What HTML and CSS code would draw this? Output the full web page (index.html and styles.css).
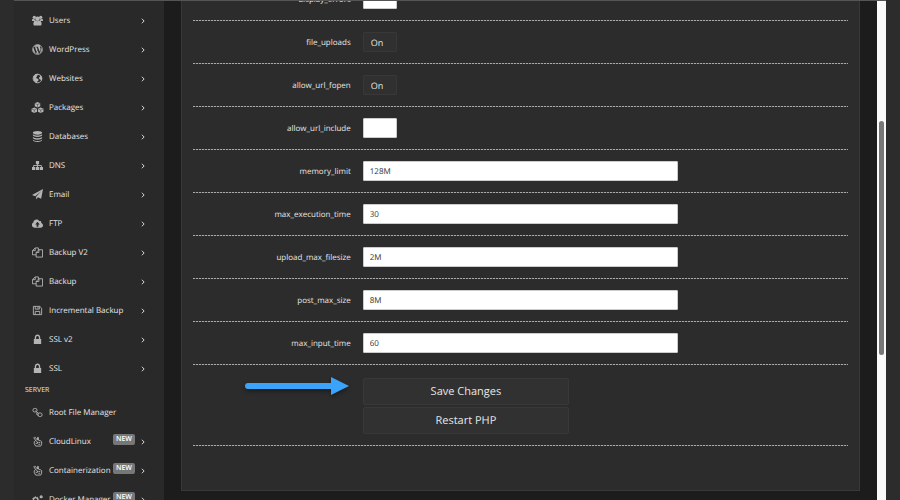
FILE: index.html
```
<!DOCTYPE html>
<html lang="en">
<head>
    <meta charset="UTF-8">
    <meta name="viewport" content="width=device-width, initial-scale=1.0">
    <title>PHP Configuration</title>
    <link rel="stylesheet" href="styles.css">
</head>
<body>
    <div class="app">
        <nav class="sidebar">
            <a class="nav-item" href="#">
                <svg class="icon" viewBox="0 0 24 24"><circle cx="5" cy="5" r="3.500"/><circle cx="19" cy="5" r="3.500"/><circle cx="12" cy="8" r="5"/><path d="M0 13c0-4 1-5 2-5 2 1 3 1 4 1 0 2 1 3 2 4H0zM24 13c0-4-1-5-2-5-2 1-3 1-4 1 0 2-1 3-2 4h8zM3 19c0-4 2-7 5-7 3 2 5 2 8 0 3 0 5 3 5 7 0 3-1 4-3 4H6c-2 0-3-1-3-4z"/></svg>
                <span>Users</span>
                <svg class="chevron" viewBox="0 0 6 8"><path d="M1.5 1l3 3-3 3"/></svg>
            </a>
            <a class="nav-item" href="#">
                <svg class="icon" viewBox="0 0 24 24"><circle class="line" cx="12" cy="12" r="10.5"/><path d="M3 8l5 13c-4-2-6-5-6-9 0-1 .4-3 1-4zM4 6c4-5 11-6 15-2-2 0-2 2-1 4 1 1 1 3 0 6l-1 3-4-10 1-.3V6H9v1l1 .2 2 4-2 6L6.500 7.200 8 7V6zM12 13l3 8c-2 .7-4 .7-6 0zM21 8c2 5 0 10-4 12l3-8z"/></svg>
                <span>WordPress</span>
                <svg class="chevron" viewBox="0 0 6 8"><path d="M1.5 1l3 3-3 3"/></svg>
            </a>
            <a class="nav-item" href="#">
                <svg class="icon" viewBox="0 0 24 24"><circle class="line" cx="12" cy="12" r="9.5"/><path d="M3 7l5-5 6 0-1 3-3 1 1 2-3 3 4 1 3 3-3 3-1 4-3-1-1-5-4-4zM3 8l5 3-1 4 2 5-5-3zM16 4l4 2 2 6-1 5-3-3-2-1-1-3 3-2z"/></svg>
                <span>Websites</span>
                <svg class="chevron" viewBox="0 0 6 8"><path d="M1.5 1l3 3-3 3"/></svg>
            </a>
            <a class="nav-item" href="#">
                <svg class="icon icon-wide" viewBox="0 0 28 24"><path d="M14 0l6 2.500v7L14 12 8 9.500v-7zM7 12l6 2.500v7L7 24l-6-2.500v-7zM21 12l6 2.500v7L21 24l-6-2.500v-7z"/><path class="cut" d="M9 3.500l5 2 5-2M14 5.500V11M2 15.500l5 2 5-2M7 17.500V23M16 15.500l5 2 5-2M21 17.500V23"/></svg>
                <span>Packages</span>
                <svg class="chevron" viewBox="0 0 6 8"><path d="M1.5 1l3 3-3 3"/></svg>
            </a>
            <a class="nav-item" href="#">
                <svg class="icon" viewBox="0 0 24 24"><ellipse cx="12" cy="4" rx="10" ry="4"/><path d="M2 7c4 4 16 4 20 0v3c-2 4-18 4-20 0zM2 13c4 4 16 4 20 0v3c-2 4-18 4-20 0zM2 19c4 4 16 4 20 0v1c-2 5-18 5-20 0z"/></svg>
                <span>Databases</span>
                <svg class="chevron" viewBox="0 0 6 8"><path d="M1.5 1l3 3-3 3"/></svg>
            </a>
            <a class="nav-item" href="#">
                <svg class="icon" viewBox="0 0 24 24"><path d="M8.500 2h7v7h-7zM0 15h7v7H0zM8.500 15h7v7h-7zM17 15h7v7h-7z"/><path class="line" d="M12 8v8M3.500 16v-4h17v4"/></svg>
                <span>DNS</span>
                <svg class="chevron" viewBox="0 0 6 8"><path d="M1.5 1l3 3-3 3"/></svg>
            </a>
            <a class="nav-item" href="#">
                <svg class="icon" viewBox="0 0 24 24"><path d="M24 0l-4 21-7-3-4 5v-6L20 5 7 16l-7-3z"/></svg>
                <span>Email</span>
                <svg class="chevron" viewBox="0 0 6 8"><path d="M1.5 1l3 3-3 3"/></svg>
            </a>
            <a class="nav-item" href="#">
                <svg class="icon" viewBox="0 0 24 24"><path fill-rule="evenodd" d="M6 21c-8 0-8-9-3-11C3 2 14 1 16 7c3-1 5 1 4 4 6 2 5 10-1 10zM12 8l-5 6h3v5h4v-5h3z"/></svg>
                <span>FTP</span>
                <svg class="chevron" viewBox="0 0 6 8"><path d="M1.5 1l3 3-3 3"/></svg>
            </a>
            <a class="nav-item" href="#">
                <svg class="icon" viewBox="0 0 24 24"><path class="line" d="M9 17H1V8l6-6h7v5M7 2v6H1M15 6h8v16H9V12zM15 6v6H9"/></svg>
                <span>Backup V2</span>
                <svg class="chevron" viewBox="0 0 6 8"><path d="M1.5 1l3 3-3 3"/></svg>
            </a>
            <a class="nav-item" href="#">
                <svg class="icon" viewBox="0 0 24 24"><path class="line" d="M9 17H1V8l6-6h7v5M7 2v6H1M15 6h8v16H9V12zM15 6v6H9"/></svg>
                <span>Backup</span>
                <svg class="chevron" viewBox="0 0 6 8"><path d="M1.5 1l3 3-3 3"/></svg>
            </a>
            <a class="nav-item" href="#">
                <svg class="icon" viewBox="0 0 24 24"><path class="line" d="M3 3h14l4 4v14H3zM7 3v6h9V3M7 21v-7h10v7M13 4v4"/></svg>
                <span>Incremental Backup</span>
                <svg class="chevron" viewBox="0 0 6 8"><path d="M1.5 1l3 3-3 3"/></svg>
            </a>
            <a class="nav-item" href="#">
                <svg class="icon" viewBox="0 0 24 24"><path fill-rule="evenodd" d="M4 11h2V8c0-9 12-9 12 0v3h2v11H4zM9 11h6V8c0-5-6-5-6 0z"/></svg>
                <span>SSL v2</span>
                <svg class="chevron" viewBox="0 0 6 8"><path d="M1.5 1l3 3-3 3"/></svg>
            </a>
            <a class="nav-item" href="#">
                <svg class="icon" viewBox="0 0 24 24"><path fill-rule="evenodd" d="M4 11h2V8c0-9 12-9 12 0v3h2v11H4zM9 11h6V8c0-5-6-5-6 0z"/></svg>
                <span>SSL</span>
                <svg class="chevron" viewBox="0 0 6 8"><path d="M1.5 1l3 3-3 3"/></svg>
            </a>

            <h2 class="nav-heading">SERVER</h2>

            <a class="nav-item" href="#">
                <svg class="icon" viewBox="0 0 24 24"><rect class="line" x="2" y="3" width="9" height="8" rx="4"/><rect class="line" x="13" y="13" width="9" height="8" rx="4"/><path class="line" d="M8 8l3 4-1 4 4 2M11 12l4 2"/></svg>
                <span>Root File Manager</span>
            </a>
            <a class="nav-item" href="#">
                <svg class="icon" viewBox="0 0 24 24"><path class="line" d="M8 22l-3-5V12l3-2 4 3v3H8M8 10L4 4l2-2 6 7V3h2v6l4 1 3 2v6l-2 4H8M14 14h4M14 18h4"/></svg>
                <span>CloudLinux</span>
                <em class="badge">NEW</em>
                <svg class="chevron" viewBox="0 0 6 8"><path d="M1.5 1l3 3-3 3"/></svg>
            </a>
            <a class="nav-item" href="#">
                <svg class="icon" viewBox="0 0 24 24"><path class="line" d="M8 22l-3-5V12l3-2 4 3v3H8M8 10L4 4l2-2 6 7V3h2v6l4 1 3 2v6l-2 4H8M14 14h4M14 18h4"/></svg>
                <span>Containerization</span>
                <em class="badge">NEW</em>
                <svg class="chevron" viewBox="0 0 6 8"><path d="M1.5 1l3 3-3 3"/></svg>
            </a>
            <a class="nav-item" href="#">
                <svg class="icon" viewBox="0 0 24 24"><circle class="gear" cx="8" cy="13" r="5"/><circle class="teeth" cx="8" cy="13" r="7"/><circle class="gear" cx="20" cy="6" r="2"/><circle class="gear" cx="20" cy="19" r="2"/></svg>
                <span>Docker Manager</span>
                <em class="badge">NEW</em>
                <svg class="chevron" viewBox="0 0 6 8"><path d="M1.5 1l3 3-3 3"/></svg>
            </a>
        </nav>

        <main class="content">
            <form class="panel">
                <div class="form-row">
                    <label for="display_errors">display_errors</label>
                    <select class="blank" id="display_errors">
                        <option value=""></option>
                        <option>On</option>
                    </select>
                </div>
                <div class="form-row">
                    <label for="file_uploads">file_uploads</label>
                    <select id="file_uploads">
                        <option>On</option>
                        <option>Off</option>
                    </select>
                </div>
                <div class="form-row">
                    <label for="allow_url_fopen">allow_url_fopen</label>
                    <select id="allow_url_fopen">
                        <option>On</option>
                        <option>Off</option>
                    </select>
                </div>
                <div class="form-row">
                    <label for="allow_url_include">allow_url_include</label>
                    <select class="blank" id="allow_url_include">
                        <option value=""></option>
                        <option>On</option>
                    </select>
                </div>
                <div class="form-row">
                    <label for="memory_limit">memory_limit</label>
                    <input type="text" id="memory_limit" value="128M">
                </div>
                <div class="form-row">
                    <label for="max_execution_time">max_execution_time</label>
                    <input type="text" id="max_execution_time" value="30">
                </div>
                <div class="form-row">
                    <label for="upload_max_filesize">upload_max_filesize</label>
                    <input type="text" id="upload_max_filesize" value="2M">
                </div>
                <div class="form-row">
                    <label for="post_max_size">post_max_size</label>
                    <input type="text" id="post_max_size" value="8M">
                </div>
                <div class="form-row">
                    <label for="max_input_time">max_input_time</label>
                    <input type="text" id="max_input_time" value="60">
                </div>
                <div class="form-row actions">
                    <svg class="arrow" viewBox="0 0 106 24"><path d="M3 6h83V0l18 9-18 9v-6H3a3 3 0 0 1 0-6z"/></svg>
                    <div class="buttons">
                        <button type="submit">Save Changes</button>
                        <button type="button">Restart PHP</button>
                    </div>
                </div>
            </form>
        </main>

        <div class="scrollbar">
            <div class="thumb"></div>
        </div>
    </div>
</body>
</html>
```
FILE: styles.css
```
* {
    margin: 0;
    padding: 0;
    box-sizing: border-box;
}

body {
    font-family: 'Open Sans', 'Noto Sans', sans-serif;
    font-size: 8px;
    color: #e6e6e6;
    background: #2c2c2c;
    height: 100vh;
    padding: 0 14px;
    overflow: hidden;
    text-rendering: geometricPrecision;
}

.app {
    display: flex;
    height: 100%;
    border-top: 1px solid #555;
    background: #1c1c1c;
    overflow: hidden;
}

/* Sidebar */
.sidebar {
    width: 150px;
    flex-shrink: 0;
    padding-top: 5px;
    background: #292929;
}

.nav-item {
    display: flex;
    align-items: center;
    height: 29px;
    padding: 0 18px;
    color: #e6e6e6;
    text-decoration: none;
    white-space: nowrap;
}

.icon {
    width: 11px;
    height: 11px;
    margin-right: 6px;
    flex-shrink: 0;
    fill: #b4b4b4;
}

.icon-wide {
    width: 13px;
    margin-left: -1px;
    margin-right: 5px;
}

.icon .line {
    fill: none;
    stroke: #b4b4b4;
    stroke-width: 2;
}

.icon .cut {
    fill: none;
    stroke: #292929;
    stroke-width: 1;
}

.icon .gear {
    fill: none;
    stroke: #b4b4b4;
    stroke-width: 3;
}

.icon .teeth {
    fill: none;
    stroke: #b4b4b4;
    stroke-width: 2;
    stroke-dasharray: 3 3;
}

.chevron {
    width: 6px;
    height: 6px;
    margin-left: auto;
    flex-shrink: 0;
    fill: none;
    stroke: #ddd;
    stroke-width: 1.3;
}

.nav-heading {
    height: 15px;
    padding-left: 11px;
    font-size: 7px;
    font-weight: 400;
    line-height: 15px;
}

.badge {
    width: 22px;
    margin: 0 5px 5px auto;
    border-radius: 2px;
    background: #777;
    color: #fff;
    font-size: 7px;
    font-style: normal;
    font-weight: 600;
    line-height: 11px;
    text-align: center;
}

.badge + .chevron {
    margin-left: 0;
}

/* Settings form */
.content {
    flex: 1;
    min-width: 0;
    padding: 0 17px;
}

.panel {
    margin-top: -24px;
    padding: 0 11px 44px;
    border: 1px solid #383838;
    background: #2c2c2c;
}

.form-row {
    display: grid;
    grid-template-columns: repeat(12, 1fr);
    align-items: center;
    height: 43px;
    padding-bottom: 1px;
    background: repeating-linear-gradient(90deg, #aaa 0 2px, #444 2px 3px) bottom / 100% 1px no-repeat;
}

.form-row label {
    grid-column: span 3;
    padding-right: 6px;
    text-align: right;
}

.form-row input,
.form-row select {
    height: 20px;
    margin: 0 6px;
    border: 1px solid #ccc;
    border-radius: 1px;
    background: #fff;
    color: #333;
    font-family: inherit;
    font-size: 8px;
    text-rendering: inherit;
}

.form-row input {
    grid-column: span 6;
    padding: 0 6px;
}

.form-row select {
    grid-column: span 3;
    justify-self: start;
    width: 34px;
    padding: 0 7px;
    appearance: none;
    border-color: #383838;
    background: #303030;
    color: #e6e6e6;
    font-size: 9px;
}

.form-row select.blank {
    border-color: #ccc;
    background: #fff;
}

.form-row.actions {
    align-items: start;
    height: auto;
    padding: 12px 0;
}

.arrow {
    grid-column: span 3;
    justify-self: end;
    width: 106px;
    height: 24px;
    margin-right: 6px;
    fill: #3ba4fa;
    filter: drop-shadow(0 2px 2px rgba(0, 0, 0, 0.4));
}

.buttons {
    grid-column: span 4;
    display: flex;
    flex-direction: column;
    gap: 2px;
    padding: 1px 6px 0;
}

.buttons button {
    height: 27px;
    border: 1px solid #383838;
    border-radius: 2px;
    background: #313131;
    color: #e6e6e6;
    font-family: inherit;
    font-size: 11px;
    text-rendering: inherit;
}

/* Scrollbar */
.scrollbar {
    width: 9px;
    padding: 120px 2px 0;
    background: #fafafa;
}

.thumb {
    height: 234px;
    border-radius: 3px;
    background: #777;
}
```
